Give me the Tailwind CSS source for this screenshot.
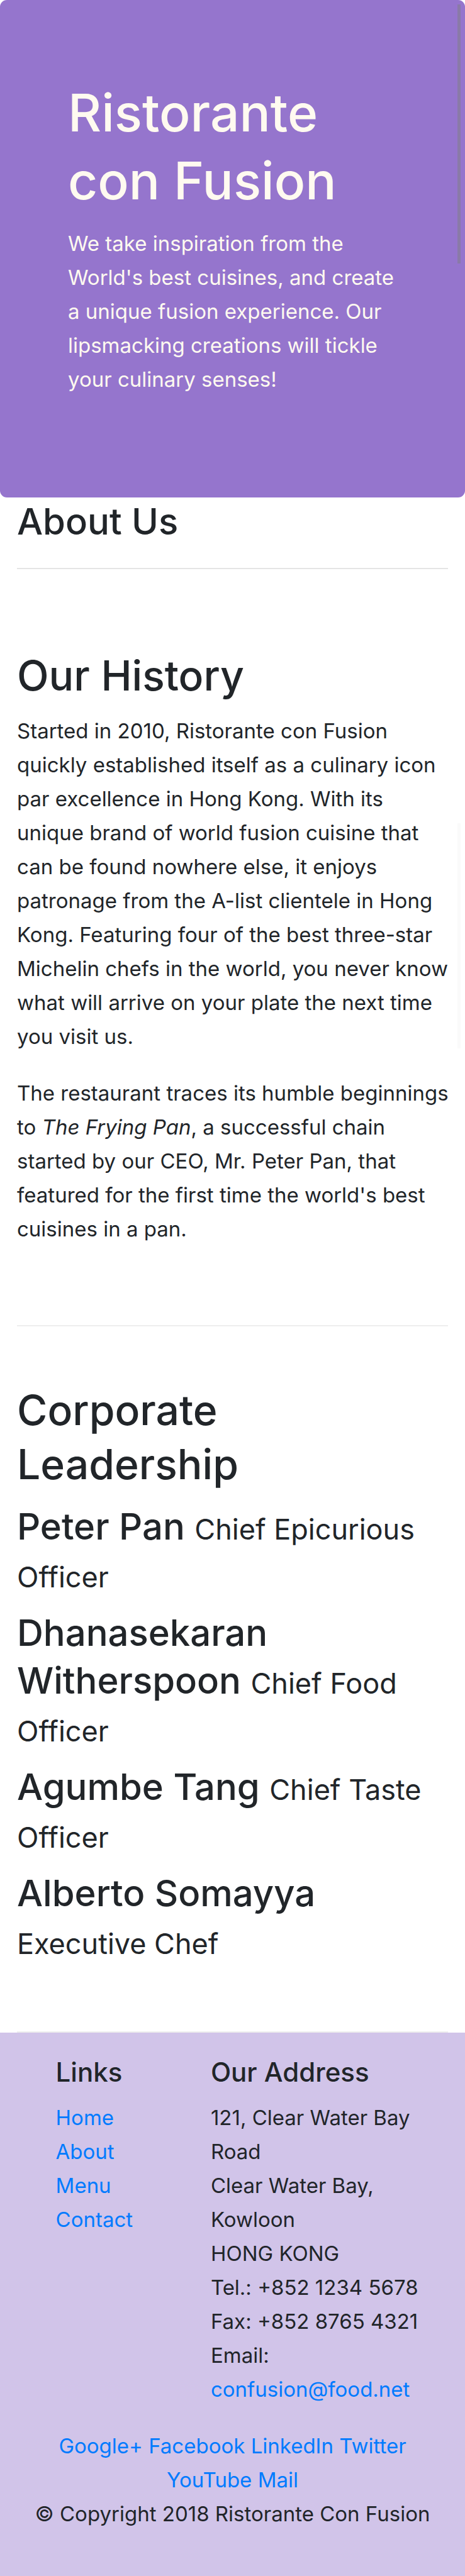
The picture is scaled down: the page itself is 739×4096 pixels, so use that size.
<!DOCTYPE html>
<html lang="en">
<head>
<meta charset="utf-8">
<meta name="viewport" content="width=device-width, initial-scale=1">
<title>Ristorante Con Fusion: About Us</title>
<script src="https://cdn.jsdelivr.net/npm/@tailwindcss/browser@4"></script>
</head>
<body class="relative bg-white font-['Inter',sans-serif] text-[33px] leading-[54px] text-[#212529]">
<header class="rounded-[11px] bg-[#9575cd] px-27 pt-[126px] pb-[161px] text-[#fffaf0]">
<h1 class="mb-[18px] text-[82px] leading-[108px] font-medium">Ristorante<br>con Fusion</h1>
<p class="whitespace-nowrap">We take inspiration from the<br>World's best cuisines, and create<br>a unique fusion experience. Our<br>lipsmacking creations will tickle<br>your culinary senses!</p>
</header>
<main class="px-[27px]">
<h3 class="text-[58px] leading-[76px] font-medium">About Us</h3>
<hr class="my-9 border-t-2 border-black/10">
<section class="border-b-2 border-[#eeeeee] pt-[90px] pb-[126px]">
<h2 class="mb-[18px] text-[66px] leading-[86px] font-medium">Our History</h2>
<p class="mb-9 whitespace-nowrap">Started in 2010, Ristorante con Fusion<br>quickly established itself as a culinary icon<br>par excellence in Hong Kong. With its<br>unique brand of world fusion cuisine that<br>can be found nowhere else, it enjoys<br>patronage from the A-list clientele in Hong<br>Kong. Featuring four of the best three-star<br>Michelin chefs in the world, you never know<br>what will arrive on your plate the next time<br>you visit us.</p>
<p class="whitespace-nowrap">The restaurant traces its humble beginnings<br>to <em>The Frying Pan</em>, a successful chain<br>started by our CEO, Mr. Peter Pan, that<br>featured for the first time the world's best<br>cuisines in a pan.</p>
</section>
<section class="border-b-2 border-[#eeeeee] pt-[90px] pb-[89px]">
<h2 class="mb-[18px] text-[66px] leading-[86px] font-medium">Corporate<br>Leadership</h2>
<h3 class="mb-[17px] text-[58px] leading-[76px] font-medium">Peter Pan <small class="text-[45px] leading-[54px] font-normal">Chief Epicurious<br>Officer</small></h3>
<h3 class="mb-[17px] text-[58px] leading-[76px] font-medium">Dhanasekaran<br>Witherspoon <small class="text-[45px] leading-[54px] font-normal">Chief Food<br>Officer</small></h3>
<h3 class="mb-[17px] text-[58px] leading-[76px] font-medium">Agumbe Tang <small class="text-[45px] leading-[54px] font-normal">Chief Taste<br>Officer</small></h3>
<h3 class="mb-[17px] text-[58px] leading-[76px] font-medium">Alberto Somayya<br><small class="text-[45px] leading-[54px] font-normal">Executive Chef</small></h3>
</section>
</main>
<footer class="bg-[#d1c4e9] py-9">
<div class="grid grid-cols-12">
<nav class="col-span-4 col-start-2 px-[27px]">
<h5 class="mb-[18px] text-[42px] leading-[54px] font-medium">Links</h5>
<ul>
<li><a href="#" class="text-[#007bff]">Home</a></li>
<li><a href="#" class="text-[#007bff]">About</a></li>
<li><a href="#" class="text-[#007bff]">Menu</a></li>
<li><a href="#" class="text-[#007bff]">Contact</a></li>
</ul>
</nav>
<div class="col-span-7 px-[27px]">
<h5 class="mb-[18px] text-[42px] leading-[54px] font-medium">Our Address</h5>
<address class="mb-9 whitespace-nowrap not-italic">121, Clear Water Bay<br>Road<br>Clear Water Bay,<br>Kowloon<br>HONG KONG<br>Tel.: +852 1234 5678<br>Fax: +852 8765 4321<br>Email:<br><a href="mailto:confusion@food.net" class="text-[#007bff]">confusion@food.net</a></address>
</div>
</div>
<div class="text-center whitespace-nowrap">
<a href="#" class="text-[#007bff]">Google+</a>
<a href="#" class="text-[#007bff]">Facebook</a>
<a href="#" class="text-[#007bff]">LinkedIn</a>
<a href="#" class="text-[#007bff]">Twitter</a><br>
<a href="#" class="text-[#007bff]">YouTube</a>
<a href="#" class="text-[#007bff]">Mail</a>
</div>
<p class="mb-9 text-center whitespace-nowrap">© Copyright 2018 Ristorante Con Fusion</p>
</footer>
<div class="absolute top-[7px] right-[7px] h-[412px] w-[5px] bg-[#8a7aa8]"></div>
<div class="absolute top-[1309px] right-[7px] h-[358px] w-[5px] bg-[#fafafa]"></div>
</body>
</html>
